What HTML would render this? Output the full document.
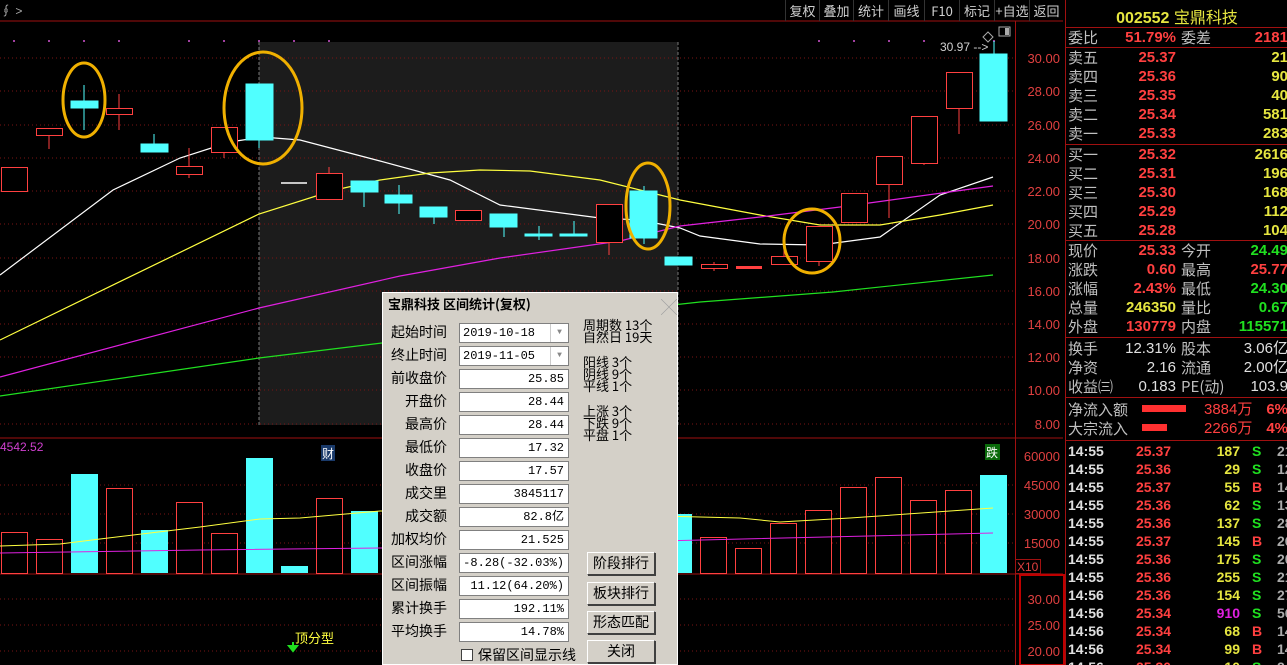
<!DOCTYPE html>
<html><head><meta charset="utf-8"><style>
*{margin:0;padding:0;box-sizing:border-box}
body{width:1287px;height:665px;background:#000;overflow:hidden;position:relative;font-family:"Liberation Sans","Noto Sans CJK SC",sans-serif}
.abs{position:absolute;white-space:nowrap}
#panel{position:absolute;left:1065px;top:0;width:222px;height:665px;border-left:1px solid #a01010;font-size:15px}
#panel .r{position:absolute;left:0;width:222px;height:19px;line-height:19px}
.l{position:absolute;left:2px;color:#c0c0c0;font-family:"Noto Sans CJK SC",sans-serif}
.v1{position:absolute;right:112px;font-weight:bold}
.l2{position:absolute;left:115px;color:#c0c0c0;font-family:"Noto Sans CJK SC",sans-serif}
.v2{position:absolute;right:0;font-weight:bold}
.red{color:#ff4040}.yel{color:#e6e640}.grn{color:#20e020}.wht{color:#e0e0e0}.mag{color:#e020e0}
.hl{position:absolute;left:0;width:222px;height:1px;background:#a01010}
#dlg{position:absolute;left:382px;top:292px;width:296px;height:373px;background:#d4d0c8;font-family:"Noto Sans CJK SC","Liberation Sans",sans-serif;color:#000;font-size:13px;border:1px solid #fff}
#dlg .lab{position:absolute;right:230px;font-size:14px}
#dlg .box{position:absolute;left:76px;width:110px;height:20px;background:#fff;border:1px solid #808080;font-family:"Liberation Mono",monospace;font-size:12px;text-align:right;padding-right:4px;line-height:18px}
#dlg .btn{position:absolute;left:204px;width:68px;height:23px;border:1px solid #404040;border-top-color:#fff;border-left-color:#fff;box-shadow:1px 1px 0 #404040;text-align:center;line-height:21px;font-size:14px}
.tb{position:absolute;top:0;height:21px;line-height:21px;color:#d0d0d0;font-size:13px;text-align:center;border-left:1px solid #333;font-family:"Noto Sans CJK SC",sans-serif}
</style></head><body>
<svg width="1065" height="665" style="position:absolute;left:0;top:0" xmlns="http://www.w3.org/2000/svg">
<rect x="259" y="42" width="419" height="383" fill="#1c1c1c"/>
<line x1="259" y1="42" x2="259" y2="425" stroke="#777" stroke-dasharray="3,2"/>
<line x1="678" y1="42" x2="678" y2="425" stroke="#777" stroke-dasharray="3,2"/>
<g stroke="#7a1414" stroke-dasharray="1,3">
<line x1="0" y1="58" x2="1015" y2="58"/><line x1="0" y1="91" x2="1015" y2="91"/><line x1="0" y1="125" x2="1015" y2="125"/><line x1="0" y1="158" x2="1015" y2="158"/><line x1="0" y1="191" x2="1015" y2="191"/><line x1="0" y1="224" x2="1015" y2="224"/><line x1="0" y1="258" x2="1015" y2="258"/><line x1="0" y1="291" x2="1015" y2="291"/><line x1="0" y1="324" x2="1015" y2="324"/><line x1="0" y1="357" x2="1015" y2="357"/><line x1="0" y1="390" x2="1015" y2="390"/><line x1="0" y1="424" x2="1015" y2="424"/>
<line x1="0" y1="485" x2="1015" y2="485"/><line x1="0" y1="514" x2="1015" y2="514"/><line x1="0" y1="543" x2="1015" y2="543"/>
<line x1="0" y1="599" x2="1015" y2="599"/><line x1="0" y1="625" x2="1015" y2="625"/><line x1="0" y1="651" x2="1015" y2="651"/>
</g>
<g fill="#a040a0"><rect x="13" y="40" width="2" height="2"/><rect x="48" y="40" width="2" height="2"/><rect x="83" y="40" width="2" height="2"/><rect x="118" y="40" width="2" height="2"/><rect x="188" y="40" width="2" height="2"/><rect x="223" y="40" width="2" height="2"/><rect x="258" y="40" width="2" height="2"/><rect x="293" y="40" width="2" height="2"/><rect x="328" y="40" width="2" height="2"/><rect x="818" y="40" width="2" height="2"/><rect x="853" y="40" width="2" height="2"/><rect x="888" y="40" width="2" height="2"/><rect x="923" y="40" width="2" height="2"/><rect x="993" y="40" width="2" height="2"/></g>
<line x1="0" y1="21" x2="1063" y2="21" stroke="#a01010"/>
<line x1="0" y1="438" x2="1063" y2="438" stroke="#a01010"/>
<line x1="0" y1="574" x2="1063" y2="574" stroke="#a01010"/>
<line x1="1015.5" y1="21" x2="1015.5" y2="665" stroke="#a01010"/>
<!-- MAs -->
<g fill="none" stroke-width="1.2">
<polyline stroke="#fff" points="0,275 113,190 180,158 230,142 262,137 300,140 380,161 450,180 500,205 600,218 640,220 680,228 700,236 760,244 820,245 880,237 940,195 993,177"/>
<polyline stroke="#ffff40" points="0,340 259,214 335,190 380,180 430,173 480,170 530,171 600,180 640,190 680,200 760,215 820,225 880,225 940,215 993,205"/>
<polyline stroke="#e020e0" points="0,377 259,308 400,276 500,258 620,241 680,226 760,217 840,207 993,186"/>
<polyline stroke="#20e020" points="0,396 259,358 382,343 600,313 700,302 833,292 993,275"/>
</g>
<!-- candles -->
<g stroke-width="1">
<g stroke="#ff4040" fill="#000">
<rect x="1.5" y="167.5" width="26" height="24"/>
<line x1="49" y1="135" x2="49" y2="149"/><rect x="36.5" y="128.5" width="26" height="7"/>
<line x1="119" y1="94" x2="119" y2="130"/><rect x="106.5" y="108.5" width="26" height="6"/>
<line x1="189" y1="148" x2="189" y2="178"/><rect x="176.5" y="166.5" width="26" height="8"/>
<line x1="224" y1="152" x2="224" y2="158"/><rect x="211.5" y="127.5" width="26" height="25"/>
<line x1="329" y1="167" x2="329" y2="173"/><rect x="316.5" y="173.5" width="26" height="26"/>
<rect x="455.5" y="210.5" width="26" height="10"/>
<line x1="609" y1="243" x2="609" y2="255"/><rect x="596.5" y="204.5" width="26" height="38"/>
<line x1="714" y1="262" x2="714" y2="271"/><rect x="701.5" y="264.5" width="26" height="4"/>
<line x1="784" y1="247" x2="784" y2="265"/><rect x="771.5" y="256.5" width="26" height="8"/>
<line x1="819" y1="261" x2="819" y2="266"/><rect x="806.5" y="226.5" width="26" height="35"/>
<rect x="841.5" y="193.5" width="26" height="29"/>
<line x1="889" y1="184" x2="889" y2="218"/><rect x="876.5" y="156.5" width="26" height="28"/>
<line x1="924" y1="163" x2="924" y2="165"/><rect x="911.5" y="116.5" width="26" height="47"/>
<line x1="959" y1="108" x2="959" y2="134"/><rect x="946.5" y="72.5" width="26" height="36"/>
</g>
<rect x="736" y="266" width="26" height="3" fill="#ff4040"/>
<g stroke="#50ffff" fill="#50ffff">
<line x1="84" y1="85" x2="84" y2="130"/><rect x="71" y="101" width="27" height="7"/>
<line x1="154" y1="134" x2="154" y2="152"/><rect x="141" y="144" width="27" height="8"/>
<line x1="259" y1="84" x2="259" y2="148"/><rect x="246" y="84" width="27" height="56"/>
<line x1="364" y1="181" x2="364" y2="207"/><rect x="351" y="181" width="27" height="11"/>
<line x1="399" y1="185" x2="399" y2="214"/><rect x="385" y="195" width="27" height="8"/>
<line x1="434" y1="207" x2="434" y2="224"/><rect x="420" y="207" width="27" height="10"/>
<line x1="504" y1="214" x2="504" y2="237"/><rect x="490" y="214" width="27" height="13"/>
<line x1="539" y1="226" x2="539" y2="240"/><rect x="525" y="234" width="27" height="2"/>
<line x1="574" y1="221" x2="574" y2="235"/><rect x="560" y="234" width="27" height="2"/>
<line x1="644" y1="186" x2="644" y2="244"/><rect x="630" y="191" width="27" height="47"/>
<rect x="665" y="257" width="27" height="8"/>
<line x1="994" y1="41" x2="994" y2="54"/><rect x="980" y="54" width="27" height="67"/>
</g>
<line x1="281" y1="183" x2="307" y2="183" stroke="#fff" stroke-width="1.5"/>
</g>
<g fill="none" stroke="#f0b000" stroke-width="3">
<ellipse cx="84" cy="100" rx="21" ry="37"/><ellipse cx="263" cy="108" rx="39" ry="56"/><ellipse cx="648" cy="206" rx="22" ry="43"/><ellipse cx="812" cy="241" rx="28" ry="32"/>
</g>
<text x="940" y="51" fill="#d0d0d0" font-size="12" font-family="Liberation Sans">30.97 --&gt;</text>
<path d="M983 37 l5 -5 l5 5 l-5 5z" fill="none" stroke="#aaa"/>
<rect x="999" y="27" width="11" height="9" fill="none" stroke="#aaa"/><rect x="1005" y="28" width="4" height="7" fill="#aaa"/>
<!-- price axis -->
<g fill="#e04040" font-size="13" font-family="Liberation Sans" text-anchor="end">
<text x="1060" y="63">30.00</text><text x="1060" y="96">28.00</text><text x="1060" y="130">26.00</text><text x="1060" y="163">24.00</text><text x="1060" y="196">22.00</text><text x="1060" y="229">20.00</text><text x="1060" y="263">18.00</text><text x="1060" y="296">16.00</text><text x="1060" y="329">14.00</text><text x="1060" y="362">12.00</text><text x="1060" y="395">10.00</text><text x="1060" y="429">8.00</text>
<text x="1060" y="461">60000</text><text x="1060" y="490">45000</text><text x="1060" y="519">30000</text><text x="1060" y="548">15000</text>
<text x="1060" y="604">30.00</text><text x="1060" y="630">25.00</text><text x="1060" y="656">20.00</text>
</g>
<rect x="1015.5" y="559.5" width="25" height="14" fill="none" stroke="#a01010"/>
<text x="1017" y="571" fill="#e04040" font-size="12" font-family="Liberation Sans">X10</text>
<rect x="1020" y="575" width="44" height="90" fill="none" stroke="#c00000" stroke-width="2"/>
<!-- volume -->
<g stroke="#ff4040" fill="#000">
<rect x="1.5" y="532.5" width="26" height="41"/><rect x="36.5" y="539.5" width="26" height="34"/><rect x="106.5" y="488.5" width="26" height="85"/><rect x="176.5" y="502.5" width="26" height="71"/><rect x="211.5" y="533.5" width="26" height="40"/><rect x="316.5" y="498.5" width="26" height="75"/>
<rect x="700.5" y="537.5" width="26" height="36"/><rect x="735.5" y="548.5" width="26" height="25"/><rect x="770.5" y="523.5" width="26" height="50"/><rect x="805.5" y="510.5" width="26" height="63"/><rect x="840.5" y="487.5" width="26" height="86"/><rect x="875.5" y="477.5" width="26" height="96"/><rect x="910.5" y="500.5" width="26" height="73"/><rect x="945.5" y="490.5" width="26" height="83"/>
</g>
<g fill="#50ffff">
<rect x="71" y="474" width="27" height="99"/><rect x="141" y="530" width="27" height="43"/><rect x="246" y="458" width="27" height="115"/><rect x="281" y="566" width="27" height="7"/><rect x="351" y="511" width="27" height="62"/><rect x="665" y="514" width="27" height="59"/><rect x="980" y="475" width="27" height="98"/>
</g>
<polyline fill="none" stroke="#ffff40" points="0,546 60,544 100,539 200,527 260,519 300,518 380,511 660,516 740,518 780,522 850,518 993,508"/>
<polyline fill="none" stroke="#e020e0" points="0,553 200,550 380,548 660,541 993,533"/>
<text x="0" y="451" fill="#d040d0" font-size="12" font-family="Liberation Sans">4542.52</text>
<rect x="321" y="445" width="14" height="16" fill="#1a3a6a"/><text x="322" y="458" fill="#fff" font-size="12" font-family="Noto Sans CJK SC">财</text>
<rect x="985" y="444" width="15" height="16" fill="#0a6a0a"/><text x="986" y="457" fill="#fff" font-size="12" font-family="Noto Sans CJK SC">跌</text>
<text x="295" y="643" fill="#ffff40" font-size="13" font-family="Noto Sans CJK SC">顶分型</text>
<path d="M293 642 v5 M289 646 l4 5 l4 -5z" stroke="#20e020" fill="#20e020" stroke-width="2"/>
<text x="0" y="15" fill="#aaa" font-size="12">∮ &gt;</text>
</svg>
<div class="tb" style="left:785px;width:34px">复权</div><div class="tb" style="left:819px;width:34px">叠加</div><div class="tb" style="left:853px;width:35px">统计</div><div class="tb" style="left:888px;width:36px">画线</div><div class="tb" style="left:924px;width:35px">F10</div><div class="tb" style="left:959px;width:35px">标记</div><div class="tb" style="left:994px;width:35px">+自选</div><div class="tb" style="left:1029px;width:34px">返回</div>

<div id="panel">
<div class="abs yel" style="left:0;width:222px;top:4px;text-align:center;font-size:16px;font-weight:bold;font-family:'Liberation Sans','Noto Sans CJK SC',sans-serif">002552 <span style="font-weight:normal">宝鼎科技</span></div>
<div class="hl" style="top:27px"></div>
<div class="r" style="top:28px"><span class="l">委比</span><span class="v1 red">51.79%</span><span class="l2">委差</span><span class="v2 red">2181</span></div>
<div class="hl" style="top:47px"></div>
<div class="r" style="top:48px"><span class="l">卖五</span><span class="v1 red">25.37</span><span class="v2 yel">21</span></div>
<div class="r" style="top:67px"><span class="l">卖四</span><span class="v1 red">25.36</span><span class="v2 yel">90</span></div>
<div class="r" style="top:86px"><span class="l">卖三</span><span class="v1 red">25.35</span><span class="v2 yel">40</span></div>
<div class="r" style="top:105px"><span class="l">卖二</span><span class="v1 red">25.34</span><span class="v2 yel">581</span></div>
<div class="r" style="top:124px"><span class="l">卖一</span><span class="v1 red">25.33</span><span class="v2 yel">283</span></div>
<div class="hl" style="top:144px"></div>
<div class="r" style="top:145px"><span class="l">买一</span><span class="v1 red">25.32</span><span class="v2 yel">2616</span></div>
<div class="r" style="top:164px"><span class="l">买二</span><span class="v1 red">25.31</span><span class="v2 yel">196</span></div>
<div class="r" style="top:183px"><span class="l">买三</span><span class="v1 red">25.30</span><span class="v2 yel">168</span></div>
<div class="r" style="top:202px"><span class="l">买四</span><span class="v1 red">25.29</span><span class="v2 yel">112</span></div>
<div class="r" style="top:221px"><span class="l">买五</span><span class="v1 red">25.28</span><span class="v2 yel">104</span></div>
<div class="hl" style="top:240px"></div>
<div class="r" style="top:241px"><span class="l">现价</span><span class="v1 red">25.33</span><span class="l2">今开</span><span class="v2 grn">24.49</span></div>
<div class="r" style="top:260px"><span class="l">涨跌</span><span class="v1 red">0.60</span><span class="l2">最高</span><span class="v2 red">25.77</span></div>
<div class="r" style="top:279px"><span class="l">涨幅</span><span class="v1 red">2.43%</span><span class="l2">最低</span><span class="v2 grn">24.30</span></div>
<div class="r" style="top:298px"><span class="l">总量</span><span class="v1 yel">246350</span><span class="l2">量比</span><span class="v2 grn">0.67</span></div>
<div class="r" style="top:317px"><span class="l">外盘</span><span class="v1 red">130779</span><span class="l2">内盘</span><span class="v2 grn">115571</span></div>
<div class="hl" style="top:337px"></div>
<div class="r" style="top:339px"><span class="l">换手</span><span class="v1 wht" style="font-weight:normal">12.31%</span><span class="l2">股本</span><span class="v2 wht" style="font-weight:normal">3.06亿</span></div>
<div class="r" style="top:358px"><span class="l">净资</span><span class="v1 wht" style="font-weight:normal">2.16</span><span class="l2">流通</span><span class="v2 wht" style="font-weight:normal">2.00亿</span></div>
<div class="r" style="top:377px"><span class="l">收益㈢</span><span class="v1 wht" style="font-weight:normal">0.183</span><span class="l2">PE(动)</span><span class="v2 wht" style="font-weight:normal">103.9</span></div>
<div class="hl" style="top:397px"></div>
<div class="r" style="top:400px"><span class="l">净流入额</span><span class="abs" style="left:76px;top:5px;width:44px;height:7px;background:#ff3030"></span><span class="abs red" style="left:138px">3884万</span><span class="v2 red">6%</span></div>
<div class="r" style="top:419px"><span class="l">大宗流入</span><span class="abs" style="left:76px;top:5px;width:25px;height:7px;background:#ff3030"></span><span class="abs red" style="left:138px">2266万</span><span class="v2 red">4%</span></div>
<div class="hl" style="top:440px"></div>
<div style="position:absolute;top:442px;left:0;font-size:14px;font-weight:bold;font-family:'Liberation Sans',sans-serif">
<div class="abs" style="top:0;line-height:18px;width:222px">
</div></div>
</div>
<div id="ticks" style="position:absolute;left:1066px;top:442px;width:221px;font-size:14px;font-weight:bold;font-family:'Liberation Sans',sans-serif;overflow:hidden;height:223px"></div>
<div style="position:absolute;left:1066px;top:442px;width:221px;height:223px;overflow:hidden;font-size:14px;font-weight:bold;font-family:'Liberation Sans',sans-serif;line-height:18px">
<div style="position:relative;height:18px"><span class="abs wht" style="left:2px">14:55</span><span class="abs red" style="left:70px">25.37</span><span class="abs yel" style="right:47px">187</span><span class="abs grn" style="left:186px">S</span><span class="abs" style="left:211px;color:#aaa">21</span></div>
<div style="position:relative;height:18px"><span class="abs wht" style="left:2px">14:55</span><span class="abs red" style="left:70px">25.36</span><span class="abs yel" style="right:47px">29</span><span class="abs grn" style="left:186px">S</span><span class="abs" style="left:211px;color:#aaa">12</span></div>
<div style="position:relative;height:18px"><span class="abs wht" style="left:2px">14:55</span><span class="abs red" style="left:70px">25.37</span><span class="abs yel" style="right:47px">55</span><span class="abs red" style="left:186px">B</span><span class="abs" style="left:211px;color:#aaa">14</span></div>
<div style="position:relative;height:18px"><span class="abs wht" style="left:2px">14:55</span><span class="abs red" style="left:70px">25.36</span><span class="abs yel" style="right:47px">62</span><span class="abs grn" style="left:186px">S</span><span class="abs" style="left:211px;color:#aaa">13</span></div>
<div style="position:relative;height:18px"><span class="abs wht" style="left:2px">14:55</span><span class="abs red" style="left:70px">25.36</span><span class="abs yel" style="right:47px">137</span><span class="abs grn" style="left:186px">S</span><span class="abs" style="left:211px;color:#aaa">28</span></div>
<div style="position:relative;height:18px"><span class="abs wht" style="left:2px">14:55</span><span class="abs red" style="left:70px">25.37</span><span class="abs yel" style="right:47px">145</span><span class="abs red" style="left:186px">B</span><span class="abs" style="left:211px;color:#aaa">26</span></div>
<div style="position:relative;height:18px"><span class="abs wht" style="left:2px">14:55</span><span class="abs red" style="left:70px">25.36</span><span class="abs yel" style="right:47px">175</span><span class="abs grn" style="left:186px">S</span><span class="abs" style="left:211px;color:#aaa">20</span></div>
<div style="position:relative;height:18px"><span class="abs wht" style="left:2px">14:55</span><span class="abs red" style="left:70px">25.36</span><span class="abs yel" style="right:47px">255</span><span class="abs grn" style="left:186px">S</span><span class="abs" style="left:211px;color:#aaa">21</span></div>
<div style="position:relative;height:18px"><span class="abs wht" style="left:2px">14:56</span><span class="abs red" style="left:70px">25.36</span><span class="abs yel" style="right:47px">154</span><span class="abs grn" style="left:186px">S</span><span class="abs" style="left:211px;color:#aaa">27</span></div>
<div style="position:relative;height:18px"><span class="abs wht" style="left:2px">14:56</span><span class="abs red" style="left:70px">25.34</span><span class="abs mag" style="right:47px">910</span><span class="abs grn" style="left:186px">S</span><span class="abs" style="left:211px;color:#aaa">56</span></div>
<div style="position:relative;height:18px"><span class="abs wht" style="left:2px">14:56</span><span class="abs red" style="left:70px">25.34</span><span class="abs yel" style="right:47px">68</span><span class="abs red" style="left:186px">B</span><span class="abs" style="left:211px;color:#aaa">14</span></div>
<div style="position:relative;height:18px"><span class="abs wht" style="left:2px">14:56</span><span class="abs red" style="left:70px">25.34</span><span class="abs yel" style="right:47px">99</span><span class="abs red" style="left:186px">B</span><span class="abs" style="left:211px;color:#aaa">14</span></div>
<div style="position:relative;height:18px"><span class="abs wht" style="left:2px">14:56</span><span class="abs red" style="left:70px">25.30</span><span class="abs yel" style="right:47px">10</span><span class="abs grn" style="left:186px">S</span><span class="abs" style="left:211px;color:#aaa">2</span></div>
</div>

<div id="dlg">
<div class="abs" style="left:0;top:0;width:294px;height:21px;background:#d4d0c8;font-weight:bold;font-size:13px;line-height:21px;padding-left:5px">宝鼎科技 区间统计(复权)</div>
<div class="abs" style="left:278px;top:1px;color:#a0a0a0;font-size:16px">╳</div>
<span class="lab" style="top:29px">起始时间</span><div class="box" style="top:30px;text-align:left;padding-left:3px">2019-10-18<span style="position:absolute;right:0;top:0;width:18px;height:18px;border-left:1px solid #ccc;color:#888;font-size:8px;text-align:center">▼</span></div>
<span class="lab" style="top:52px">终止时间</span><div class="box" style="top:53px;text-align:left;padding-left:3px">2019-11-05<span style="position:absolute;right:0;top:0;width:18px;height:18px;border-left:1px solid #ccc;color:#888;font-size:8px;text-align:center">▼</span></div>
<span class="lab" style="top:75px">前收盘价</span><div class="box" style="top:76px">25.85</div>
<span class="lab" style="top:98px">开盘价</span><div class="box" style="top:99px">28.44</div>
<span class="lab" style="top:121px">最高价</span><div class="box" style="top:122px">28.44</div>
<span class="lab" style="top:144px">最低价</span><div class="box" style="top:145px">17.32</div>
<span class="lab" style="top:167px">收盘价</span><div class="box" style="top:168px">17.57</div>
<span class="lab" style="top:190px">成交里</span><div class="box" style="top:191px">3845117</div>
<span class="lab" style="top:213px">成交额</span><div class="box" style="top:214px">82.8亿</div>
<span class="lab" style="top:236px">加权均价</span><div class="box" style="top:237px">21.525</div>
<span class="lab" style="top:259px">区间涨幅</span><div class="box" style="top:260px">-8.28(-32.03%)</div>
<span class="lab" style="top:282px">区间振幅</span><div class="box" style="top:283px">11.12(64.20%)</div>
<span class="lab" style="top:305px">累计换手</span><div class="box" style="top:306px">192.11%</div>
<span class="lab" style="top:328px">平均换手</span><div class="box" style="top:329px">14.78%</div>
<div class="abs" style="left:200px;top:26px;font-size:13px;line-height:12px">周期数 13个<br>自然日 19天</div>
<div class="abs" style="left:200px;top:63px;font-size:13px;line-height:12px">阳线 3个<br>阴线 9个<br>平线 1个</div>
<div class="abs" style="left:200px;top:112px;font-size:13px;line-height:12px">上涨 3个<br>下跌 9个<br>平盘 1个</div>
<div class="btn" style="top:259px">阶段排行</div>
<div class="btn" style="top:289px">板块排行</div>
<div class="btn" style="top:318px">形态匹配</div>
<div class="btn" style="top:347px">关闭</div>
<div class="abs" style="left:78px;top:356px;width:12px;height:12px;background:#fff;border:1px solid #404040"></div>
<div class="abs" style="left:95px;top:352px;font-size:14px">保留区间显示线</div>
</div>
</body></html>
